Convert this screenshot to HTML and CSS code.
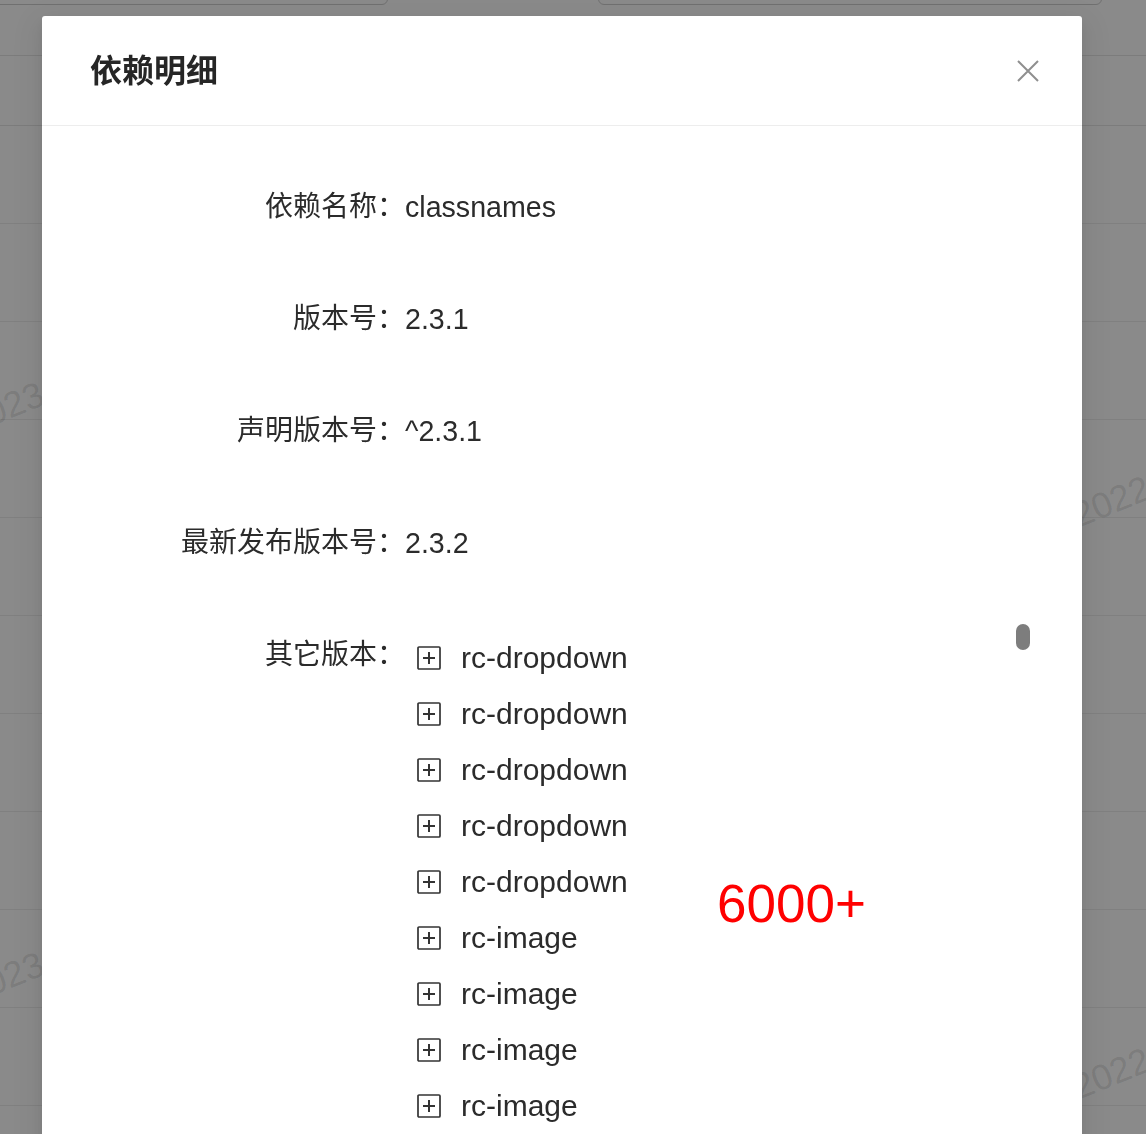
FILE: index.html
```html
<!DOCTYPE html>
<html lang="zh-CN">
<head>
<meta charset="utf-8">
<title>依赖明细</title>
<link rel="stylesheet" href="styles.css">
</head>
<body>
<div class="page">
  <div class="toolbar">
    <div class="search search-a"></div>
    <div class="search search-b"></div>
  </div>
  <div class="table">
    <div class="thead"></div>
    <div class="trow"></div><div class="trow"></div><div class="trow"></div><div class="trow"></div>
    <div class="trow"></div><div class="trow"></div><div class="trow"></div><div class="trow"></div>
    <div class="trow"></div><div class="trow"></div><div class="trow"></div>
  </div>
  <span class="wm wm-l1">2023</span>
  <span class="wm wm-r1">2022</span>
  <span class="wm wm-l2">2023</span>
  <span class="wm wm-r2">2022</span>
</div>
<div class="mask"></div>
<div class="modal">
  <div class="modal-header">
    <div class="modal-title">依赖明细</div>
    <button class="modal-close" aria-label="关闭">
      <svg width="24" height="24" viewBox="0 0 24 24"><path d="M2 2 L22 22 M22 2 L2 22" stroke="#8f8f8f" stroke-width="2" fill="none"/></svg>
    </button>
  </div>
  <div class="modal-body">
    <div class="form-item"><div class="label">依赖名称：</div><div class="value">classnames</div></div>
    <div class="form-item"><div class="label">版本号：</div><div class="value">2.3.1</div></div>
    <div class="form-item"><div class="label">声明版本号：</div><div class="value">^2.3.1</div></div>
    <div class="form-item"><div class="label">最新发布版本号：</div><div class="value">2.3.2</div></div>
    <div class="form-item form-item-tree">
      <div class="label">其它版本：</div>
      <div class="tree">
        <span class="tree-thumb"></span>
        <div class="tree-node"><svg class="expander" width="24" height="24" viewBox="0 0 24 24"><rect x="1" y="1" width="22" height="22" rx="1" fill="none" stroke="#333" stroke-width="1.7"/><path d="M6 12 H18 M12 6 V18" stroke="#333" stroke-width="2"/></svg><span class="node-title">rc-dropdown</span></div>
        <div class="tree-node"><svg class="expander" width="24" height="24" viewBox="0 0 24 24"><rect x="1" y="1" width="22" height="22" rx="1" fill="none" stroke="#333" stroke-width="1.7"/><path d="M6 12 H18 M12 6 V18" stroke="#333" stroke-width="2"/></svg><span class="node-title">rc-dropdown</span></div>
        <div class="tree-node"><svg class="expander" width="24" height="24" viewBox="0 0 24 24"><rect x="1" y="1" width="22" height="22" rx="1" fill="none" stroke="#333" stroke-width="1.7"/><path d="M6 12 H18 M12 6 V18" stroke="#333" stroke-width="2"/></svg><span class="node-title">rc-dropdown</span></div>
        <div class="tree-node"><svg class="expander" width="24" height="24" viewBox="0 0 24 24"><rect x="1" y="1" width="22" height="22" rx="1" fill="none" stroke="#333" stroke-width="1.7"/><path d="M6 12 H18 M12 6 V18" stroke="#333" stroke-width="2"/></svg><span class="node-title">rc-dropdown</span></div>
        <div class="tree-node"><svg class="expander" width="24" height="24" viewBox="0 0 24 24"><rect x="1" y="1" width="22" height="22" rx="1" fill="none" stroke="#333" stroke-width="1.7"/><path d="M6 12 H18 M12 6 V18" stroke="#333" stroke-width="2"/></svg><span class="node-title">rc-dropdown</span></div>
        <div class="tree-node"><svg class="expander" width="24" height="24" viewBox="0 0 24 24"><rect x="1" y="1" width="22" height="22" rx="1" fill="none" stroke="#333" stroke-width="1.7"/><path d="M6 12 H18 M12 6 V18" stroke="#333" stroke-width="2"/></svg><span class="node-title">rc-image</span></div>
        <div class="tree-node"><svg class="expander" width="24" height="24" viewBox="0 0 24 24"><rect x="1" y="1" width="22" height="22" rx="1" fill="none" stroke="#333" stroke-width="1.7"/><path d="M6 12 H18 M12 6 V18" stroke="#333" stroke-width="2"/></svg><span class="node-title">rc-image</span></div>
        <div class="tree-node"><svg class="expander" width="24" height="24" viewBox="0 0 24 24"><rect x="1" y="1" width="22" height="22" rx="1" fill="none" stroke="#333" stroke-width="1.7"/><path d="M6 12 H18 M12 6 V18" stroke="#333" stroke-width="2"/></svg><span class="node-title">rc-image</span></div>
        <div class="tree-node"><svg class="expander" width="24" height="24" viewBox="0 0 24 24"><rect x="1" y="1" width="22" height="22" rx="1" fill="none" stroke="#333" stroke-width="1.7"/><path d="M6 12 H18 M12 6 V18" stroke="#333" stroke-width="2"/></svg><span class="node-title">rc-image</span></div>
        <div class="tree-node"><svg class="expander" width="24" height="24" viewBox="0 0 24 24"><rect x="1" y="1" width="22" height="22" rx="1" fill="none" stroke="#333" stroke-width="1.7"/><path d="M6 12 H18 M12 6 V18" stroke="#333" stroke-width="2"/></svg><span class="node-title">rc-image</span></div>
      </div>
    </div>
  </div>
  <div class="annotation">6000+</div>
</div>
</body>
</html>
```

FILE: styles.css
```css
* { box-sizing: border-box; }

html, body {
  margin: 0;
  padding: 0;
  height: 100%;
  overflow: hidden;
  background: #ffffff;
  font-family: "Liberation Sans", "Noto Sans CJK SC", sans-serif;
}

.page {
  position: relative;
  height: 1134px;
  overflow: hidden;
}

.toolbar {
  display: flex;
  align-items: flex-end;
  height: 5px;
}

.search {
  flex: none;
  height: 40px;
  border: 1.5px solid #cfcfcf;
  border-radius: 6px;
  background: #fff;
}

.search-a {
  width: 400px;
  margin-left: -12px;
}

.search-b {
  width: 504px;
  margin-left: 210px;
}

.table {
  margin-top: 50px;
  border-top: 1.5px solid #e6e6e6;
}

.thead {
  height: 70px;
  border-bottom: 1.5px solid #e6e6e6;
}

.trow {
  height: 98px;
  border-bottom: 1.5px solid #ececec;
}

.wm {
  position: absolute;
  font-size: 36px;
  color: rgba(0, 0, 0, 0.11);
  transform: rotate(-22deg);
  transform-origin: left bottom;
  white-space: nowrap;
}

.wm-l1 { left: -24px; top: 400px; }
.wm-r1 { left: 1082px; top: 494px; }
.wm-l2 { left: -24px; top: 970px; }
.wm-r2 { left: 1082px; top: 1066px; }

.mask {
  position: fixed;
  inset: 0;
  background: rgba(0, 0, 0, 0.46);
}

.modal {
  position: absolute;
  top: 16px;
  left: 42px;
  width: 1040px;
  height: 1300px;
  background: #fff;
  border-radius: 3px;
  box-shadow: 0 6px 16px rgba(0, 0, 0, 0.08), 0 9px 28px 8px rgba(0, 0, 0, 0.05);
}

.modal-header {
  height: 110px;
  padding: 0 42px 0 48px;
  display: flex;
  align-items: center;
  justify-content: space-between;
  border-bottom: 1.5px solid #ededed;
}

.modal-title {
  font-size: 32px;
  font-weight: 700;
  color: #262626;
  line-height: 44px;
}

.modal-close {
  width: 24px;
  height: 24px;
  padding: 0;
  margin: 0;
  border: 0;
  background: transparent;
  display: flex;
}

.modal-body {
  padding: 60px 48px 0 48px;
}

.form-item {
  display: flex;
  height: 42px;
  margin-bottom: 70px;
  font-size: 28px;
  line-height: 42px;
  color: #2b2b2b;
}

.label {
  width: 315px;
  flex: none;
  text-align: right;
  white-space: nowrap;
}

.value {
  flex: 1;
  white-space: nowrap;
  font-size: 28.6px;
}

.form-item-tree {
  height: auto;
}

.tree {
  position: relative;
  flex: 1;
  margin-top: -4px;
}

.tree-thumb {
  position: absolute;
  right: 4px;
  top: -6px;
  width: 14px;
  height: 26px;
  border-radius: 7px;
  background: #7d7d7d;
}

.tree-node {
  display: flex;
  align-items: center;
  height: 56px;
  padding-left: 12px;
}

.expander {
  flex: none;
}

.node-title {
  margin-left: 20px;
  font-size: 30px;
  line-height: 56px;
  color: #2b2b2b;
}

.annotation {
  position: absolute;
  left: 675px;
  top: 862px;
  font-size: 53px;
  line-height: 52px;
  color: #ff0000;
}
```
